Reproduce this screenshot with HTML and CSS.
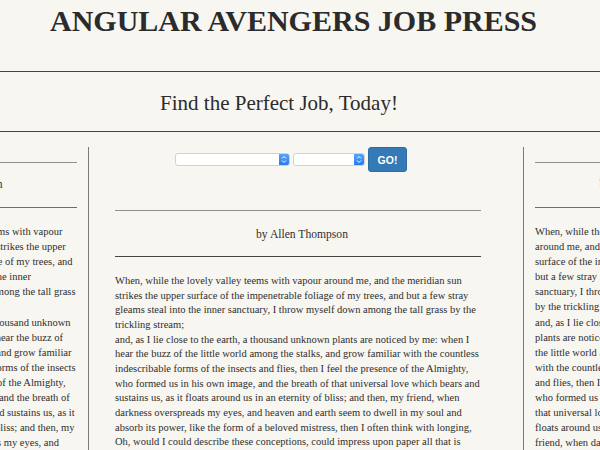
FILE: index.html
```html
<!DOCTYPE html>
<html>
<head>
<meta charset="utf-8">
<title>Angular Avengers Job Press</title>
<link rel="stylesheet" href="styles.css">
</head>
<body>
<header class="masthead">
  <h1 class="title">ANGULAR AVENGERS JOB PRESS</h1>
</header>
<section class="tagline">
  <h2 class="tagline-text">Find the Perfect Job, Today!</h2>
</section>
<main class="columns">
  <article class="col col-side col-left">
    <div class="rule rule-light"></div>
    <div class="byline"><span class="byline-left">by Allen Thompson</span></div>
    <div class="rule rule-mid"></div>
    <p class="story story-side">When, while the lovely valley teems with vapour around me, and the meridian sun strikes the upper surface of the impenetrable foliage of my trees, and but a few stray gleams steal into the inner<br>sanctuary, I throw myself down among the tall grass by the trickling stream;<br>and, as I lie close to the earth, a thousand unknown plants are noticed by me: when I hear the buzz of the little world among the stalks, and grow familiar with the countless indescribable forms of the insects and flies, then I feel the presence of the Almighty, who formed us in his own image, and the breath of that universal love which bears and sustains us, as it floats around us in an eternity of bliss; and then, my friend, when darkness overspreads my eyes, and heaven and earth seem to dwell in my soul and absorb its power, like the form of a beloved mistress, then I often think with longing, Oh, would I could describe these conceptions, could impress upon paper all that is living so full and warm within me.</p>
  </article>
  <article class="col col-center">
    <form class="search">
      <div class="select select-wide"><span class="stepper"><svg width="6" height="9" viewBox="0 0 6 9"><path d="M1 3.5 L3 1.5 L5 3.5 M1 5.5 L3 7.5 L5 5.5" fill="none" stroke="#fff" stroke-width="1"/></svg></span></div>
      <div class="select select-narrow"><span class="stepper"><svg width="6" height="9" viewBox="0 0 6 9"><path d="M1 3.5 L3 1.5 L5 3.5 M1 5.5 L3 7.5 L5 5.5" fill="none" stroke="#fff" stroke-width="1"/></svg></span></div>
      <button type="button" class="go">GO!</button>
    </form>
    <div class="rule rule-light"></div>
    <div class="byline">by Allen Thompson</div>
    <div class="rule rule-dark"></div>
    <p class="story story-center">When, while the lovely valley teems with vapour around me, and the meridian sun strikes the upper surface of the impenetrable foliage of my trees, and but a few stray gleams steal into the inner sanctuary, I throw myself down among the tall grass by the trickling stream;<br>and, as I lie close to the earth, a thousand unknown plants are noticed by me: when I hear the buzz of the little world among the stalks, and grow familiar with the countless indescribable forms of the insects and flies, then I feel the presence of the Almighty, who formed us in his own image, and the breath of that universal love which bears and sustains us, as it floats around us in an eternity of bliss; and then, my friend, when darkness overspreads my eyes, and heaven and earth seem to dwell in my soul and absorb its power, like the form of a beloved mistress, then I often think with longing, Oh, would I could describe these conceptions, could impress upon paper all that is living so full and warm within me, that it might be the mirror of my soul, as my soul is the mirror of the infinite God!</p>
  </article>
  <article class="col col-side col-right">
    <div class="rule rule-light"></div>
    <div class="byline">by Allen Thompson</div>
    <div class="rule rule-mid"></div>
    <p class="story story-side">When, while the lovely valley teems with vapour around me, and the meridian sun strikes the upper surface of the impenetrable foliage of my trees, and but a few stray gleams steal into the inner<br>sanctuary, I throw myself down among the tall grass by the trickling stream;<br>and, as I lie close to the earth, a thousand unknown plants are noticed by me: when I hear the buzz of the little world among the stalks, and grow familiar with the countless indescribable forms of the insects and flies, then I feel the presence of the Almighty, who formed us in his own image, and the breath of that universal love which bears and sustains us, as it floats around us in an eternity of bliss; and then, my friend, when darkness overspreads my eyes, and heaven and earth seem to dwell in my soul and absorb its power, like the form of a beloved mistress, then I often think with longing, Oh, would I could describe these conceptions, could impress upon paper all that is living so full and warm within me.</p>
  </article>
</main>
</body>
</html>
```

FILE: styles.css
```css
html, body {
  margin: 0;
  padding: 0;
}
body {
  background: #f8f6f1;
  color: #2e2e2e;
  font-family: "Liberation Serif", "Times New Roman", serif;
  overflow: hidden;
  width: 600px;
  height: 450px;
}
.masthead {
  padding: 4px 13px 33px 0;
  border-bottom: 1px solid #444;
}
.title {
  margin: 0;
  font-size: 30px;
  line-height: 34px;
  font-weight: 700;
  text-align: center;
  color: #2b2b2b;
  white-space: nowrap;
}
.tagline {
  padding: 19px 42px 16px 0;
  border-bottom: 1px solid #444;
}
.tagline-text {
  margin: 0;
  font-size: 21px;
  line-height: 24px;
  font-weight: 400;
  text-align: center;
  color: #2b2b2b;
}
.columns {
  display: flex;
  align-items: stretch;
  margin: 15px 0 0 -144px;
  width: 902px;
  height: 320px;
}
.col {
  flex: none;
}
.col-side {
  width: 221px;
  padding-top: 15px;
}
.col-left {
  padding-right: 11px;
}
.col-right {
  padding-left: 11px;
}
.col-center {
  width: 366px;
  padding: 0 42px 0 26px;
  border-left: 1px solid #7a7a7a;
  border-right: 1px solid #7a7a7a;
}
.rule {
  height: 0;
  border-top: 1px solid #999;
}
.rule-light {
  border-top-color: #8f8f8f;
}
.rule-mid {
  border-top-color: #6d6d6d;
}
.rule-dark {
  border-top-color: #444;
}
.byline {
  height: 44px;
  line-height: 44px;
  font-size: 11.6px;
  text-align: center;
  white-space: nowrap;
}
.col-center .byline {
  height: 45px;
  line-height: 47px;
  padding-left: 8px;
}
.byline-left {
  display: inline-block;
  margin-left: -20px;
}
.story {
  font-size: 10.5px;
}
.story-side {
  margin: 16px 0 0;
  line-height: 15.1px;
}
.story-center {
  margin: 17px 0 0;
  line-height: 14.65px;
}
.search {
  display: flex;
  align-items: center;
  gap: 3px;
  height: 25px;
  padding-left: 60px;
  margin: 0 0 38px;
}
.select {
  display: flex;
  justify-content: flex-end;
  height: 13px;
  border: 1px solid #d4d2cc;
  border-radius: 3px;
  background: #fff;
  box-sizing: border-box;
  overflow: hidden;
}
.select-wide {
  width: 115px;
}
.select-narrow {
  width: 72px;
}
.stepper {
  display: flex;
  align-items: center;
  justify-content: center;
  width: 10px;
  height: 100%;
  background: linear-gradient(#57a4fb, #2a78ee);
}
.go {
  width: 39px;
  height: 25px;
  margin: 0;
  padding: 0;
  border: 1px solid #2e6da4;
  border-radius: 3px;
  background: #337ab7;
  color: #fff;
  font-family: "Liberation Sans", Arial, sans-serif;
  font-size: 10.5px;
  font-weight: 700;
}
```
